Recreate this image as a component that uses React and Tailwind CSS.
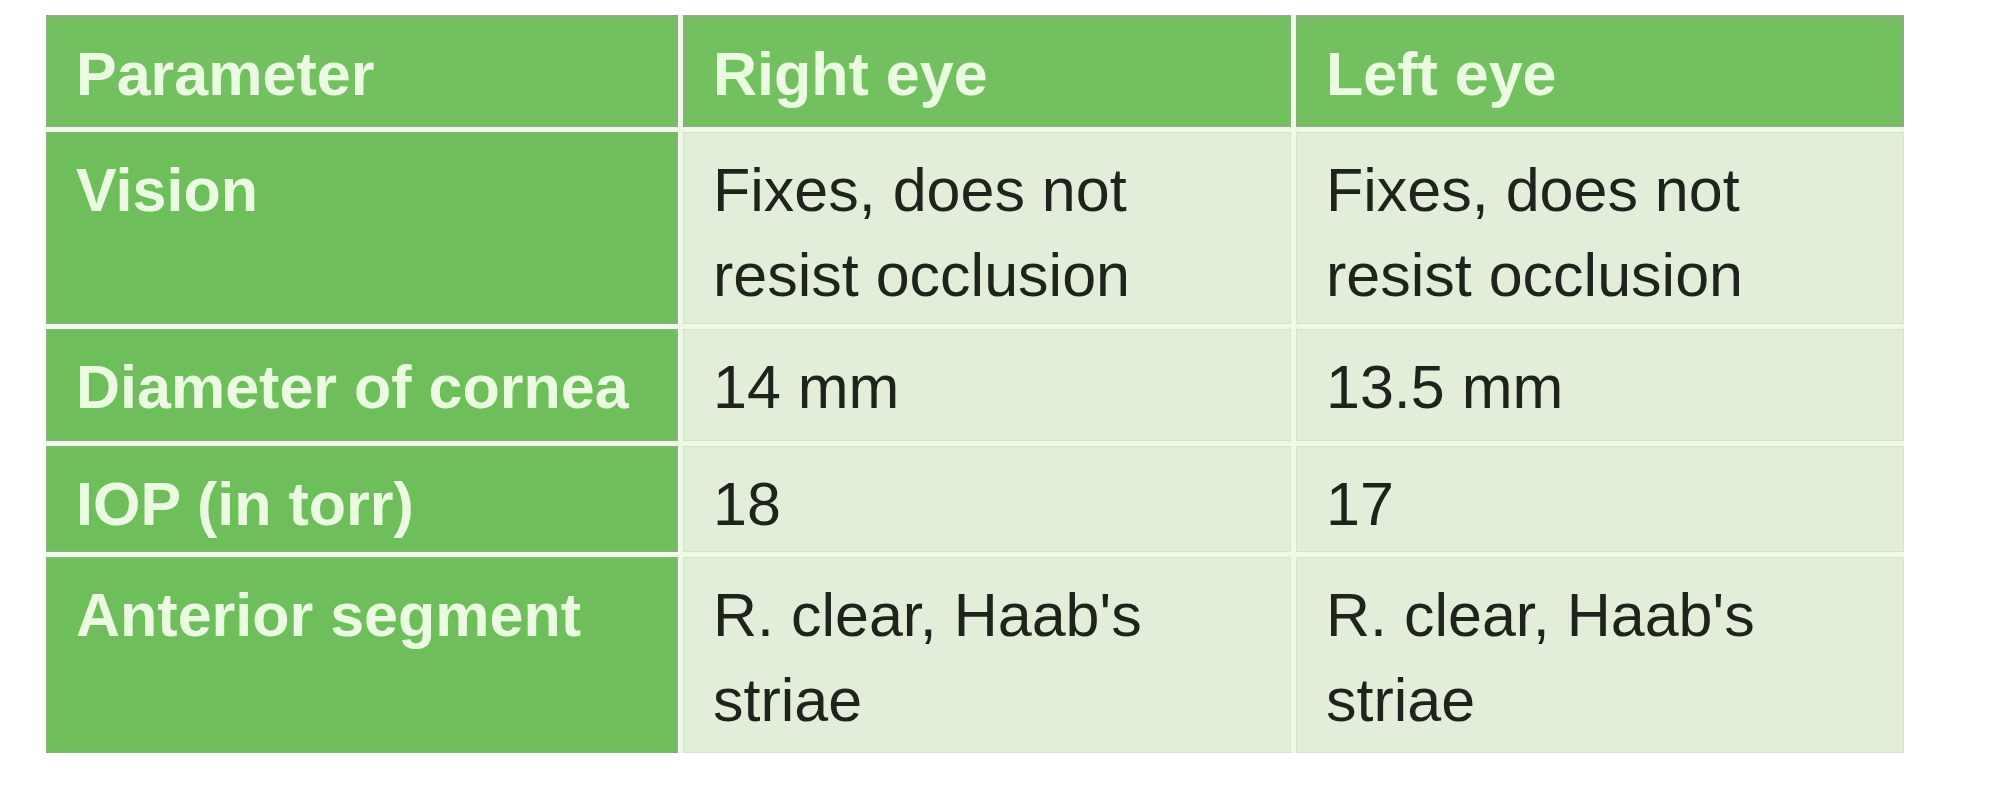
import React from 'react';

const rows = [
  { param: 'Vision', right: ['Fixes, does not', 'resist occlusion'], left: ['Fixes, does not', 'resist occlusion'] },
  { param: 'Diameter of cornea', right: ['14 mm'], left: ['13.5 mm'] },
  { param: 'IOP (in torr)', right: ['18'], left: ['17'] },
  { param: 'Anterior segment', right: ["R. clear, Haab's", 'striae'], left: ["R. clear, Haab's", 'striae'] },
];

const Lines = ({ lines }) => (
  <>
    {lines.map((l, i) => (
      <React.Fragment key={i}>
        {i > 0 && <br />}
        {l}
      </React.Fragment>
    ))}
  </>
);

const headCell = 'bg-[#72c05f] text-[#ebfbe2] font-bold pl-[30px] pt-[17px] shadow-[inset_0_0_0_2px_#8cae83]';
const paramCell = 'bg-[#6ebf5b] text-[#ebfbe2] font-bold pl-[30px] pt-[16px] shadow-[inset_0_0_0_2px_#84b479]';
const valueCell = 'bg-[#e2eeda] text-[#1e241c] pl-[30px] pt-[16px] shadow-[inset_0_0_0_1px_#d6e2ce]';

export default function App() {
  return (
    <div className="w-[2005px] h-[800px] bg-white overflow-hidden pt-[15px] pl-[46px] font-['Liberation_Sans',Arial,sans-serif]">
      <div className="grid w-fit grid-cols-[632px_608px_608px] grid-rows-[112px_192px_112px_106px_196px] gap-[5px] bg-[#eefae6] text-[61px] leading-[85px]">
        <div className={headCell}>Parameter</div>
        <div className={headCell}>Right eye</div>
        <div className={headCell}>Left eye</div>
        {rows.map((r) => (
          <React.Fragment key={r.param}>
            <div className={paramCell}>{r.param}</div>
            <div className={valueCell}>
              <Lines lines={r.right} />
            </div>
            <div className={valueCell}>
              <Lines lines={r.left} />
            </div>
          </React.Fragment>
        ))}
      </div>
    </div>
  );
}
